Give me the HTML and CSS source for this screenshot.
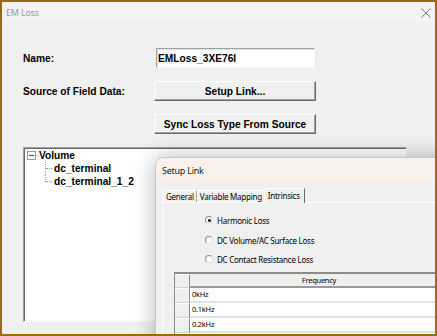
FILE: index.html
```html
<!DOCTYPE html>
<html lang="en">
<head>
    <meta charset="UTF-8">
    <title>EM Loss</title>
    <link rel="stylesheet" href="styles.css">
</head>
<body>
    <div class="window">
        <div class="titlebar">
            <span class="title">EM Loss</span>
            <svg class="close" width="10" height="10" viewBox="0 0 10 10">
                <path d="M0.5 0.5 L9.5 9.5 M9.5 0.5 L0.5 9.5" stroke="#7a7a7a" stroke-width="1" fill="none"/>
            </svg>
        </div>

        <div class="content">
            <div class="form">
                <label class="form-label">Name:</label>
                <div class="text-field">EMLoss_3XE76I</div>

                <label class="form-label">Source of Field Data:</label>
                <button class="btn">Setup Link...</button>

                <span></span>
                <button class="btn">Sync Loss Type From Source</button>
            </div>

            <div class="tree">
                <div class="tree-root">
                    <span class="expander"></span>
                    <span class="branch"></span>
                    <span>Volume</span>
                </div>
                <div class="tree-children">
                    <div class="leaf">dc_terminal</div>
                    <div class="leaf">dc_terminal_1_2</div>
                </div>
            </div>
        </div>

        <div class="dialog">
            <div class="dialog-title">Setup Link</div>
            <div class="dialog-body">
                <div class="tabs">
                    <div class="tab">General</div>
                    <div class="tab">Variable Mapping</div>
                    <div class="tab active">Intrinsics</div>
                </div>
                <div class="tab-panel">
                    <div class="radios">
                        <div class="radio-row"><span class="radio checked"></span>Harmonic Loss</div>
                        <div class="radio-row"><span class="radio"></span>DC Volume/AC Surface Loss</div>
                        <div class="radio-row"><span class="radio"></span>DC Contact Resistance Loss</div>
                    </div>

                    <div class="grid">
                        <div class="corner"></div>
                        <div class="col-head">Frequency</div>
                        <div class="row-head"></div>
                        <div class="cell">0kHz</div>
                        <div class="row-head"></div>
                        <div class="cell">0.1kHz</div>
                        <div class="row-head"></div>
                        <div class="cell">0.2kHz</div>
                        <div class="row-head"></div>
                        <div class="cell"></div>
                    </div>
                </div>
            </div>
        </div>
    </div>
</body>
</html>
```

FILE: styles.css
```css
* {
    margin: 0;
    padding: 0;
    box-sizing: border-box;
}

body {
    width: 437px;
    height: 336px;
    overflow: hidden;
    font-family: 'Liberation Sans', Arial, sans-serif;
    background: #f0f0f0;
}

.window {
    position: relative;
    width: 437px;
    height: 336px;
    border: 2px solid #9c6b0c;
    background: #f0f0f0;
    overflow: hidden;
}

.titlebar {
    height: 21px;
    display: flex;
    align-items: center;
    justify-content: space-between;
    padding: 0 4px 0 4px;
    background: #f3f3f3;
}

.title {
    font-family: 'Noto Sans', 'Open Sans', sans-serif;
    font-size: 9px;
    color: #9a9a9a;
    letter-spacing: -0.2px;
}

.content {
    padding: 25px 0 0 21px;
}

/* top form rows */
.form {
    display: grid;
    grid-template-columns: 131px 162px;
    grid-auto-rows: 20px;
    row-gap: 13px;
    align-items: center;
}

.form-label {
    font-size: 10.2px;
    font-weight: 700;
    color: #000;
}

.text-field {
    width: 159px;
    height: 20px;
    margin-left: 2px;
    padding: 3px 1px 0;
    background: #fff;
    border: 1px solid;
    border-color: #a0a0a0 #f8f8f8 #f8f8f8 #a0a0a0;
    box-shadow: inset 1px 1px 0 #e3e3e3;
    font-size: 10.2px;
    font-weight: 700;
    line-height: 13px;
}

.btn {
    width: 162px;
    height: 20px;
    background: #f0f0f0;
    border: 1px solid;
    border-color: #fff #696969 #696969 #fff;
    box-shadow: inset -1px -1px 0 #a0a0a0;
    font-family: 'Liberation Sans', Arial, sans-serif;
    font-size: 10.2px;
    font-weight: 700;
    color: #000;
}

/* tree view */
.tree {
    margin-top: 13px;
    width: 384px;
    height: 175px;
    padding: 1px 0 0 3px;
    background: #fff;
    border: 1px solid;
    border-color: #a0a0a0 #f4f4f4 #f4f4f4 #a0a0a0;
    box-shadow: inset 1px 1px 0 #696969;
    font-size: 10.2px;
    font-weight: 700;
}

.tree-root {
    height: 13px;
    display: flex;
    align-items: center;
}

.expander {
    position: relative;
    width: 9px;
    height: 9px;
    border: 1px solid #9a9a9a;
}

.expander::after {
    content: '';
    position: absolute;
    left: 1px;
    top: 3px;
    width: 5px;
    height: 1px;
    background: #444;
}

.branch {
    width: 3px;
    border-top: 1px dotted #a0a0a0;
}

.leaf {
    position: relative;
    height: 13px;
    line-height: 13px;
    padding-left: 27px;
}

.leaf::before {
    content: '';
    position: absolute;
    left: 18px;
    top: -2px;
    height: 15px;
    border-left: 1px dotted #a0a0a0;
}

.leaf:last-child::before {
    top: 0;
    height: 7px;
}

.leaf::after {
    content: '';
    position: absolute;
    left: 19px;
    top: 6px;
    width: 6px;
    border-top: 1px dotted #a0a0a0;
}

/* overlapping Setup Link dialog */
.dialog {
    position: absolute;
    left: 153px;
    top: 155px;
    width: 300px;
    height: 200px;
    border: 1px solid #c9c5c2;
    border-radius: 8px 8px 0 0;
    background: #f0f0f0;
    box-shadow: 0 0 22px rgba(0, 0, 0, 0.28);
    font-family: 'Noto Sans', 'Open Sans', sans-serif;
    font-size: 8px;
    letter-spacing: -0.25px;
    color: #000;
    overflow: hidden;
}

.dialog-title {
    height: 24px;
    display: flex;
    align-items: center;
    padding-left: 6px;
    background: #faf1eb;
    font-size: 9px;
    color: #222;
}

.dialog-body {
    padding: 5px 0 0 6px;
}

.tabs {
    display: flex;
    align-items: flex-end;
    height: 15px;
    padding-left: 1px;
}

.tab {
    position: relative;
    height: 12px;
    line-height: 11px;
    padding: 0 2px;
    border: 1px solid;
    border-color: #fff #a0a0a0 transparent #fff;
    border-bottom: none;
}

.tab.active {
    height: 15px;
    line-height: 13px;
    padding: 0 4px 0 3px;
    margin-left: -1px;
    margin-bottom: -1px;
    background: #f0f0f0;
    border-color: #fff #696969 transparent #fff;
    z-index: 1;
}

.tab-panel {
    border-top: 1px solid #fff;
    border-left: 1px solid #fff;
    height: 160px;
}

.radios {
    padding: 7px 0 0 42px;
}

.radio-row {
    height: 20px;
    display: flex;
    align-items: center;
    gap: 4px;
}

.radio-row:last-child {
    height: 18px;
}

.radio {
    position: relative;
    width: 8px;
    height: 8px;
    border-radius: 50%;
    background: #fff;
    border: 1px solid;
    border-color: #8a8a8a #e0e0e0 #e0e0e0 #8a8a8a;
}

.radio.checked::after {
    content: '';
    position: absolute;
    left: 1.5px;
    top: 1.5px;
    width: 3px;
    height: 3px;
    border-radius: 50%;
    background: #000;
}

.grid {
    display: grid;
    grid-template-columns: 15px 258px;
    grid-template-rows: 14px repeat(4, 15px);
    margin: 4px 0 0 11px;
    border-top: 2px solid #8c8c8c;
    border-left: 1px solid #8c8c8c;
    font-size: 7.5px;
}

.corner,
.row-head {
    background: #efefef;
    border-right: 1px solid #8c8c8c;
    border-bottom: 1px solid #d4d4d4;
    border-top: 1px solid #fff;
}

.col-head {
    background: #efefef;
    border-bottom: 2px solid #9a9a9a;
    text-align: center;
    line-height: 12px;
}

.cell {
    background: #fff;
    border-bottom: 2px solid #e2e2e2;
    padding-left: 2px;
    line-height: 13px;
}
```
